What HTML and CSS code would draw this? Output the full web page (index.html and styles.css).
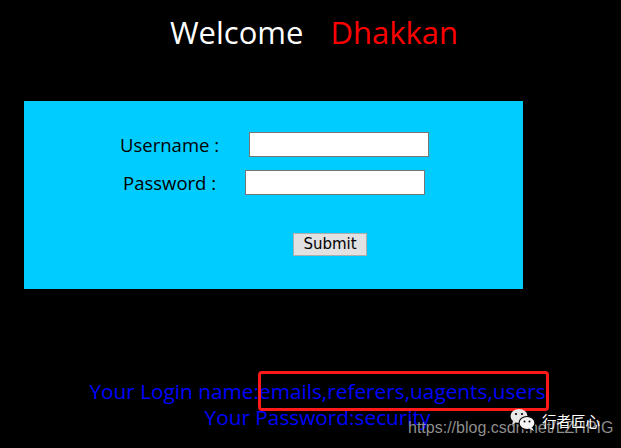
FILE: index.html
```html
<!DOCTYPE html>
<html>
<head>
<meta charset="utf-8">
<link rel="stylesheet" href="styles.css">
</head>
<body>
<div class="page">
  <div class="title"><span class="welcome">Welcome</span><span class="name">Dhakkan</span></div>
  <div class="panel">
    <div class="row row-user">
      <span class="label">Username :</span>
      <span class="field"></span>
    </div>
    <div class="row row-pass">
      <span class="label">Password :</span>
      <span class="field"></span>
    </div>
    <div class="row row-submit">
      <span class="btn">Submit</span>
    </div>
  </div>
  <div class="result">
    <div class="line">Your Login name:emails,referers,uagents,users</div>
    <div class="line">Your Password:security</div>
  </div>
  <div class="highlight"></div>
  <div class="wm-url">https://blog.csdn.net/LZHPIG</div>
  <div class="wm-brand">
    <svg class="wm-icon" width="26" height="24" viewBox="0 0 26 24">
      <ellipse cx="9" cy="8" rx="8.5" ry="7" fill="#e8e8e8"/>
      <path d="M3 13 L2 17 L6 14 Z" fill="#e8e8e8"/>
      <ellipse cx="17" cy="15" rx="8" ry="6.5" fill="#f4f4f4" stroke="#000" stroke-width="1.2"/>
      <path d="M22 19.5 L24 23 L19 20.5 Z" fill="#f4f4f4"/>
      <circle cx="6" cy="6" r="1.1" fill="#000"/>
      <circle cx="12" cy="6" r="1.1" fill="#000"/>
      <circle cx="14.5" cy="13.5" r="1" fill="#000"/>
      <circle cx="19.5" cy="13.5" r="1" fill="#000"/>
    </svg>
    <span>行者匠心</span>
  </div>
</div>
</body>
</html>
```
FILE: styles.css
```css
html, body {
  margin: 0;
  padding: 0;
  background: #000;
}
.page {
  position: relative;
  width: 621px;
  height: 448px;
  overflow: hidden;
  font-family: "Open Sans", "Noto Sans", sans-serif;
}
.title {
  display: flex;
  justify-content: center;
  gap: 27px;
  padding-top: 10px;
  padding-left: 7px;
  font-size: 31px;
  line-height: 44px;
  height: 44px;
}
.welcome { color: #fff; }
.name { color: #ff0000; }
.panel {
  margin: 47px 0 0 24px;
  width: 499px;
  height: 188px;
  background: #00ccff;
  box-sizing: border-box;
  padding-top: 31px;
}
.row {
  display: flex;
  align-items: center;
  height: 25px;
}
.label {
  color: #000;
  font-size: 18.5px;
}
.field {
  width: 178px;
  height: 23px;
  background: #fff;
  border: 1px solid #767676;
}
.row-user { padding-left: 96px; gap: 30px; }
.row-pass { padding-left: 99px; gap: 29px; margin-top: 13px; }
.row-submit { padding-left: 269px; margin-top: 38px; height: 23px; }
.btn {
  box-sizing: border-box;
  width: 74px;
  height: 23px;
  background: #e1e1e1;
  border: 1px solid #adadad;
  font-family: "DejaVu Sans", sans-serif;
  font-size: 15px;
  line-height: 21px;
  text-align: center;
  color: #000;
}
.result {
  margin-top: 89px;
  padding-left: 14px;
  text-align: center;
  color: #0000ff;
  font-size: 20.8px;
  line-height: 26px;
}
.highlight {
  position: absolute;
  left: 258px;
  top: 371px;
  width: 285px;
  height: 34px;
  border: 3px solid #ff1a1a;
  border-radius: 4px;
}
.wm-brand {
  position: absolute;
  left: 510px;
  top: 408px;
  display: flex;
  align-items: center;
  gap: 6px;
  color: #fff;
  font-family: "Noto Sans CJK SC", sans-serif;
  font-size: 14.5px;
}
.wm-url {
  position: absolute;
  left: 408px;
  top: 419px;
  color: rgba(170, 170, 170, 0.85);
  font-family: "Liberation Sans", sans-serif;
  font-size: 16px;
}
```
